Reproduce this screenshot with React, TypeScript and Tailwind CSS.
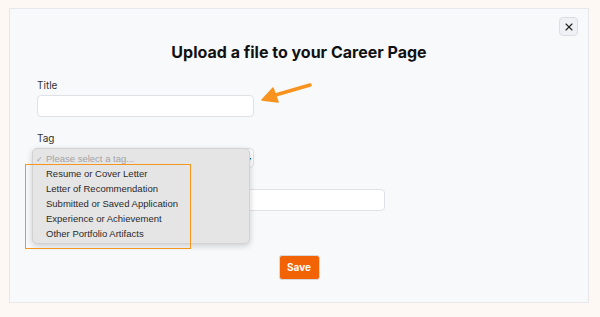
import { X } from 'lucide-react'

const tags = [
  'Resume or Cover Letter',
  'Letter of Recommendation',
  'Submitted or Saved Application',
  'Experience or Achievement',
  'Other Portfolio Artifacts',
]

export default function App() {
  return (
    <div className="h-[317px] w-[600px] bg-[#fef8f4] pt-[8px] pl-[9px] font-['Inter',sans-serif]">
      <div className="relative h-[295px] w-[580px] border border-[#e6e8eb] bg-[#f8f9fb]">
        <button className="absolute right-[10px] top-[8px] flex h-[19px] w-[19px] items-center justify-center rounded-[4px] border border-[#dcdee2] bg-[#f0f1f4] text-[#222]">
          <X size={12} strokeWidth={2.25} />
        </button>

        <div className="flex flex-col px-[27px]">
          <h1 className="mt-[29px] text-center text-[16px] font-bold leading-[28px] text-[#111]">
            Upload a file to your Career Page
          </h1>

          <label className="mt-[12px] text-[10px] leading-[14px] text-[#333]">Title</label>
          <div className="mt-[3px] h-[22px] w-[217px] rounded-[4px] border border-[#dfe1e5] bg-white" />

          <label className="mt-[14px] text-[10px] leading-[14px] text-[#333]">Tag</label>
          <div className="mt-[3px] flex h-[20px] w-[217px] items-center justify-end rounded-[4px] border border-[#dfe1e5] bg-white pr-[2px] text-[6px] text-[#222]">
            ▾
          </div>

          <div className="mt-[21px] h-[22px] w-[348px] rounded-[4px] border border-[#dfe1e5] bg-white" />

          <div className="mt-[44px] flex justify-center">
            <button className="h-[25px] w-[41px] rounded-[3px] border border-[#d9d9d9] bg-[#f26306] text-[10px] font-bold text-white">
              Save
            </button>
          </div>
        </div>

        {/* open select menu */}
        <div className="absolute left-[22px] top-[139px] h-[96px] w-[218px] rounded-[5px] border border-[#d2d2d2] bg-[#e5e5e6] pt-[3px] shadow-[0_2px_6px_rgba(0,0,0,0.18)] font-['Liberation_Sans',sans-serif]">
          <div className="flex h-[15px] items-center pl-[3px] text-[9.5px] text-[#a3a3a3]">
            <span className="w-[10px] text-[8px]">✓</span>
            <span>Please select a tag...</span>
          </div>
          {tags.map((t) => (
            <div key={t} className="flex h-[15px] items-center pl-[13px] text-[9.5px] text-[#2a2a2a]">
              {t}
            </div>
          ))}
        </div>

        {/* annotation box */}
        <div className="absolute left-[15px] top-[155px] h-[85px] w-[166px] border-[1.5px] border-[#f5961f]" />

        {/* annotation arrow */}
        <svg className="absolute left-[248px] top-[72px]" width="56" height="24" viewBox="0 0 56 24">
          <path d="M52 4 L14 15" stroke="#f7931e" strokeWidth="3.5" strokeLinecap="round" fill="none" />
          <path d="M4 19 L15 7 L20 21 Z" fill="#f7931e" stroke="#f7931e" strokeWidth="1.5" strokeLinejoin="round" />
        </svg>
      </div>
    </div>
  )
}
